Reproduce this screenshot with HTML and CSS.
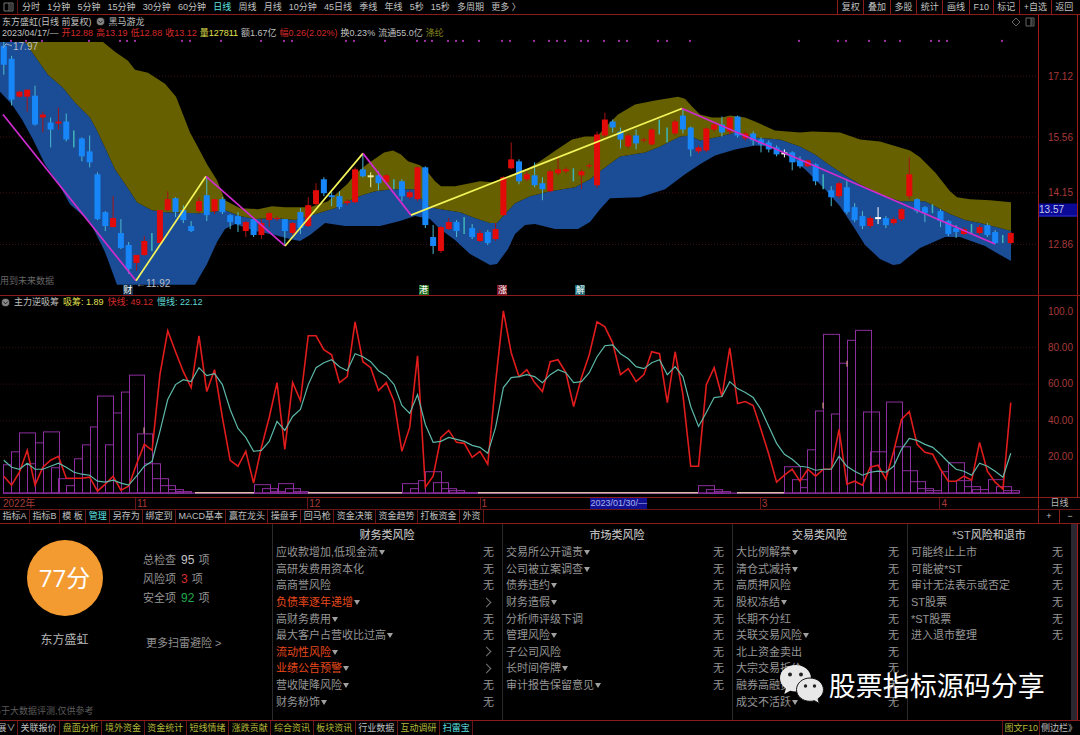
FILE: index.html
```html
<!DOCTYPE html>
<html lang="zh-CN">
<head>
<meta charset="utf-8">
<title>东方盛虹 日线</title>
<link rel="stylesheet" href="styles.css">
</head>
<body>
<header class="topbar">
  <button class="layout-btn" aria-label="布局"><svg viewBox="0 0 12 10"><path d="M1 1h9v8H1zM6 1v8M8 2v6" /></svg></button>
  <nav class="periods">
    <button>分时</button><button>1分钟</button><button>5分钟</button><button>15分钟</button><button>30分钟</button><button>60分钟</button><button class="on">日线</button><button>周线</button><button>月线</button><button>10分钟</button><button>45日线</button><button>季线</button><button>年线</button><button>5秒</button><button>15秒</button><button>多周期</button><button>更多 〉</button>
  </nav>
  <nav class="tools">
    <button>复权</button><button>叠加</button><button>多股</button><button>统计</button><button>画线</button><button>F10</button><button>标记</button><button>+自选</button><button>返回</button>
  </nav>
</header>

<section class="pane price">
  <div class="plot">
    <svg class="chart" id="price" viewBox="0 15 1038 281" preserveAspectRatio="none"></svg>
    <div class="legend">
      <div class="line title"><span>东方盛虹(日线 前复权)</span><svg class="round" viewBox="0 0 10 10"><circle cx="5" cy="5" r="4.5"/><path d="M2.5 4L5 6.5 7.5 4"/></svg><span>黑马游龙</span></div>
      <div class="line quote"><span>2023/04/17/—</span><span class="up">开12.88</span><span class="up">高13.19</span><span class="up">低12.88</span><span class="up">收13.12</span><span class="yel">量127811</span><span>额1.67亿</span><span class="up">幅0.26(2.02%)</span><span>换0.23%</span><span>流通55.0亿</span><span class="olive">涤纶</span></div>
    </div>
    <svg class="corner" viewBox="0 0 26 12"><path d="M6 2l4 4-4 4-4-4zM16 2h8v8h-8zM21 2v8M22 3v6"/></svg>
    <span class="note high">17.97</span>
    <span class="note low">←11.92</span>
    <span class="note future">用到未来数据</span>
    <span class="tag t1">财</span><span class="tag t2">港</span><span class="tag t3">涨</span><span class="tag t4">解</span>
  </div>
  <div class="scale"><span class="p1">17.12</span><span class="p2">15.56</span><span class="p3">14.15</span><span class="p4">12.86</span><span class="now">13.57</span></div>
  <div class="edge"></div>
</section>

<section class="pane osc">
  <div class="plot">
    <svg class="chart" id="osc" viewBox="0 296 1038 202" preserveAspectRatio="none"></svg>
    <div class="legend"><div class="line osc-title"><svg class="round" viewBox="0 0 10 10"><circle cx="5" cy="5" r="4.5"/><path d="M2.5 4L5 6.5 7.5 4"/></svg><span>主力逆吸筹</span><span class="yel">吸筹: 1.89</span><span class="up">快线: 49.12</span><span class="cyan">慢线: 22.12</span></div></div>
  </div>
  <div class="scale"><span class="q1">100.0</span><span class="q2">80.00</span><span class="q3">60.00</span><span class="q4">40.00</span><span class="q5">20.00</span></div>
  <div class="edge"></div>
</section>

<section class="dates">
  <div class="axis"><span class="d0">2022年</span><span class="d1">11</span><span class="d2">12</span><span class="d3">1</span><span class="d4">2023/01/30/—</span><span class="d5">3</span><span class="d6">4</span></div>
  <div class="cycle">日线</div>
</section>

<section class="templates">
  <nav class="tabs">
    <button>指标A</button><button>指标B</button><button>模 板</button><button class="on">管理</button><button>另存为</button><button>绑定到</button><button>MACD基本</button><button>赢在龙头</button><button>操盘手</button><button>回马枪</button><button>资金决策</button><button>资金趋势</button><button>打板资金</button><button>外资</button>
  </nav>
  <div class="zoomers"><button>+</button><button>−</button></div>
</section>

<main class="risk">
  <section class="summary">
    <div class="who"><div class="score">77分</div><div class="name">东方盛虹</div></div>
    <div class="counts">
      <p>总检查 <b>95</b> 项</p><p>风险项 <b class="bad">3</b> 项</p><p>安全项 <b class="ok">92</b> 项</p>
      <a href="#" class="more">更多扫雷避险 &gt;</a>
    </div>
    <p class="source">基于大数据评测,仅供参考</p>
  </section>
  <section class="group">
    <h2>财务类风险</h2>
    <ul>
      <li><span class="m">应收款增加,低现金流</span><i>无</i></li>
      <li><span>高研发费用资本化</span><i>无</i></li>
      <li><span>高商誉风险</span><i>无</i></li>
      <li class="warn"><span class="m">负债率逐年递增</span><i class="go"></i></li>
      <li><span class="m">高财务费用</span><i>无</i></li>
      <li><span class="m">最大客户占营收比过高</span><i>无</i></li>
      <li class="warn"><span class="m">流动性风险</span><i class="go"></i></li>
      <li class="warn"><span class="m">业绩公告预警</span><i class="go"></i></li>
      <li><span class="m">营收陡降风险</span><i>无</i></li>
      <li><span class="m">财务粉饰</span><i>无</i></li>
    </ul>
  </section>
  <section class="group">
    <h2>市场类风险</h2>
    <ul>
      <li><span class="m">交易所公开谴责</span><i>无</i></li>
      <li><span class="m">公司被立案调查</span><i>无</i></li>
      <li><span class="m">债券违约</span><i>无</i></li>
      <li><span class="m">财务造假</span><i>无</i></li>
      <li><span>分析师评级下调</span><i>无</i></li>
      <li><span class="m">管理风险</span><i>无</i></li>
      <li><span>子公司风险</span><i>无</i></li>
      <li><span class="m">长时间停牌</span><i>无</i></li>
      <li><span class="m">审计报告保留意见</span><i>无</i></li>
    </ul>
  </section>
  <section class="group">
    <h2>交易类风险</h2>
    <ul>
      <li><span class="m">大比例解禁</span><i>无</i></li>
      <li><span class="m">清仓式减持</span><i>无</i></li>
      <li><span>高质押风险</span><i>无</i></li>
      <li><span class="m">股权冻结</span><i>无</i></li>
      <li><span>长期不分红</span><i>无</i></li>
      <li><span class="m">关联交易风险</span><i>无</i></li>
      <li><span>北上资金卖出</span><i>无</i></li>
      <li><span>大宗交易折价</span><i>无</i></li>
      <li><span>融券高融资</span><i>无</i></li>
      <li><span class="m">成交不活跃</span><i>无</i></li>
    </ul>
  </section>
  <section class="group">
    <h2>*ST风险和退市</h2>
    <ul>
      <li><span>可能终止上市</span><i>无</i></li>
      <li><span>可能被*ST</span><i>无</i></li>
      <li><span>审计无法表示或否定</span><i>无</i></li>
      <li><span>ST股票</span><i>无</i></li>
      <li><span>*ST股票</span><i>无</i></li>
      <li><span>进入退市整理</span><i>无</i></li>
    </ul>
  </section>
  <div class="scroll"></div>
  <div class="edge"></div>
  <div class="brand">
    <svg viewBox="0 0 44 39">
      <path class="bubble" d="M15.500 0C6.900 0 0 5.900 0 13.200c0 4.200 2.300 7.900 5.900 10.300L4.300 29l5.900-3.200c1.700.4 3.400.7 5.300.7 8.600 0 15.500-6 15.500-13.300S24.100 0 15.500 0z"/>
      <circle cx="10" cy="9.500" r="2"/><circle cx="21" cy="9.500" r="2"/>
      <path class="bubble front" d="M30 13c-7.500 0-13.500 5.200-13.500 11.700S22.500 36.300 30 36.300c1.500 0 3-.2 4.400-.6l4.900 2.800-1.300-4.700c3.300-2.100 5.500-5.400 5.500-9.100C43.500 18.200 37.500 13 30 13z"/>
      <circle cx="25.500" cy="21" r="1.700"/><circle cx="34.500" cy="21" r="1.700"/>
    </svg>
    <span>股票指标源码分享</span>
  </div>
</main>

<footer class="bottom">
  <nav class="tabs">
    <button class="cut">展∨</button><button>关联报价</button><button class="y">盘面分析</button><button class="y">境外资金</button><button class="y">资金统计</button><button class="y">短线情绪</button><button class="y">涨跌贡献</button><button class="y">综合资讯</button><button class="y">板块资讯</button><button>行业数据</button><button class="y">互动调研</button><button class="on">扫雷宝</button>
  </nav>
  <nav class="side"><button class="y">图文F10</button><button>侧边栏》</button></nav>
</footer>
<script src="chart.js"></script>
</body>
</html>
```
FILE: styles.css
```css
* { box-sizing: border-box; }
body {
  margin: 0;
  height: 100vh;
  display: flex;
  flex-direction: column;
  overflow: hidden;
  background: #000;
  color: #c0c0c0;
  font: 9px/12px "Liberation Sans", "Noto Sans CJK SC", sans-serif;
}
button {
  margin: 0; padding: 0; border: 0;
  background: none; color: inherit; font: inherit;
  white-space: nowrap;
}
b { font-weight: normal; }
i { font-style: normal; }
.up { color: #d42a2a; }
.yel { color: #e2e250; }
.olive { color: #8c8c20; }
.cyan { color: #5fd6d0; }

.topbar { flex: 0 0 15px; display: flex; border-bottom: 1px solid #8c1c1c; }
.layout-btn { width: 18px; border-right: 1px solid #5a1212; }
.layout-btn svg { display: block; width: 12px; height: 10px; margin: 0 auto; fill: none; stroke: #777; }
.periods { width: 46.2%; margin-left: 4px; display: flex; justify-content: space-between; }
.periods .on, .tabs .on { color: #5fe0e0; }
.tools { margin-left: auto; margin-right: 3px; width: 240px; display: flex; }
.tools button { flex: 1 0 auto; border-left: 1px solid #8c1c1c; }

.pane { display: grid; grid-template-columns: minmax(0, 1fr) 39px 3px; min-height: 0; border-bottom: 1px solid #8c1c1c; }
.price { flex: 281 1 0; }
.osc { flex: 202 1 0; }
.plot { position: relative; overflow: hidden; }
.chart { position: absolute; inset: 0; width: 100%; height: 100%; }
.legend { position: relative; padding: 1px 2px; white-space: nowrap; }
.line { display: flex; align-items: center; height: 11px; gap: 4px; }
.quote { gap: 3px; }
.osc .legend { padding: 1px; }
.round { width: 9px; height: 9px; fill: #888; stroke: #111; }
.scale { position: relative; border-left: 1px solid #a01c1c; color: #a53a3a; font-size: 10px; }
.scale span { position: absolute; right: 4px; transform: translateY(-50%); }
.scale .p1 { top: 22%; }
.scale .p2 { top: 44%; }
.scale .p3 { top: 63.8%; }
.scale .p4 { top: 82.2%; }
.scale .now { top: 69.8%; left: 0; right: 0; background: #0a0a96; color: #c8c8e8; border-bottom: 1px solid #3030d0; }
.scale .q1 { top: 8%; }
.scale .q2 { top: 26%; }
.scale .q3 { top: 44%; }
.scale .q4 { top: 62.4%; }
.scale .q5 { top: 80.4%; }
.edge { border-left: 1px solid #a01c1c; }
.corner { position: absolute; right: 2px; top: 1px; width: 26px; height: 12px; fill: none; stroke: #666; }
.note { position: absolute; font-size: 10px; color: #b8bcc4; }
.high { left: 13px; top: 26px; }
.low { left: 13.1%; bottom: 5px; }
.future { left: 0; bottom: 8px; font-size: 9px; color: #666; }
.tag { position: absolute; bottom: 0; width: 10px; height: 10px; line-height: 10px; text-align: center; color: #fff; transform: translateX(-50%); }
.t1 { left: 12.3%; background: #10304c; }
.t2 { left: 40.8%; background: #1c6a1c; }
.t3 { left: 48.4%; background: #7a1424; }
.t4 { left: 55.9%; background: #1a6a72; }

.dates { flex: 0 0 12px; display: grid; grid-template-columns: minmax(0, 1fr) 42px; border-bottom: 1px solid #6a1616; color: #a53a3a; font-size: 10px; line-height: 11px; }
.axis { position: relative; }
.axis span { position: absolute; top: 0; border-left: 1px solid #6a1616; padding-left: 1px; }
.axis .d0 { left: 2px; border: 0; }
.d1 { left: 13%; }
.d2 { left: 29.6%; }
.d3 { left: 46.2%; }
.axis .d4 { left: 56.8%; background: #101090; color: #a8b4f0; border: 0; font-size: 9px; }
.d5 { left: 73.2%; }
.d6 { left: 90.5%; }
.cycle { border-left: 1px solid #a01c1c; color: #b4b4b4; font-size: 9px; text-align: center; }

.templates { flex: 0 0 14px; display: flex; justify-content: space-between; border-bottom: 1px solid #8c1c1c; }
.tabs { display: flex; }
.tabs button { flex: 1 0 auto; border-right: 1px solid #6a1616; }
.templates .tabs { width: 44.8%; }
.zoomers { width: 42px; display: flex; border-left: 1px solid #8c1c1c; }
.zoomers button { flex: 1; }
.zoomers button + button { border-left: 1px solid #8c1c1c; }

.risk {
  position: relative;
  flex: 197 1 0;
  min-height: 0;
  display: grid;
  grid-template-columns: 272fr 230fr 230fr 175fr 164fr 6px 3px;
  border-bottom: 1px solid #8c1c1c;
  font-size: 11px;
  line-height: 16px;
  color: #969696;
}
.summary { display: grid; grid-template-columns: 143px 1fr; grid-template-rows: 1fr auto; overflow: hidden; }
.who { width: 129px; padding-top: 16px; display: flex; flex-direction: column; align-items: center; }
.score { width: 76px; height: 76px; border-radius: 50%; background: #f39a30; color: #fff; font: 24px/76px "Open Sans", "Noto Sans CJK SC", sans-serif; text-align: center; }
.name { margin-top: 16px; font-size: 12px; color: #b4b4b4; }
.counts { padding-top: 27px; }
.counts p { margin: 0; line-height: 19px; }
.counts b { font-size: 12px; color: #c4c4c4; padding: 0 1px 0 2px; }
.counts .bad { color: #d83030; }
.counts .ok { color: #22a84c; }
.more { display: block; margin: 27px 0 0 3px; color: #909090; text-decoration: none; }
.source { margin: 0 0 1px -8px; font-size: 9px; color: #5c5c5c; grid-column: 1 / 3; white-space: nowrap; }
.group { border-left: 1px solid #2a2a2a; padding: 3px 8px 10px 3px; display: flex; flex-direction: column; min-height: 0; }
.group h2 { margin: 0 -4px 0 0; font-size: 11px; font-weight: 500; line-height: 17px; color: #b8b8b8; text-align: center; }
.group ul { flex: 1; min-height: 0; margin: 0; padding: 0; list-style: none; display: grid; grid-template-rows: repeat(10, minmax(0, 1fr)); }
.group li { display: flex; justify-content: space-between; align-items: center; white-space: nowrap; }
.m::after { content: ""; display: inline-block; margin: 0 0 1px 1px; border: 3px solid transparent; border-top: 5px solid #a0a0a0; border-bottom: 0; }
.warn span { color: #e8491c; }
.go { width: 7px; height: 7px; margin-right: 4px; border: solid #777; border-width: 1px 1px 0 0; transform: rotate(45deg); }
.scroll { background: #2b2630; }
.brand { position: absolute; left: 72.2%; bottom: 16px; display: flex; align-items: center; gap: 5px; color: #fff; font: 27px/36px "Noto Sans CJK SC", sans-serif; white-space: nowrap; }
.brand svg { width: 44px; height: 39px; fill: #222; }
.brand .bubble { fill: #e8e8e8; }
.brand .front { stroke: #111; }

.bottom { flex: 0 0 14px; display: flex; justify-content: space-between; overflow: hidden; }
.bottom .tabs { width: 44.2%; margin-left: -4px; }
.bottom .y { color: #b4b83a; }
.bottom .tabs .cut { flex: 0 0 22px; }
.side { display: flex; margin-right: 2px; }
.side button { border-left: 1px solid #6a1616; padding: 0 1px; }
```
FILE: chart.js
```js
const NS = "http://www.w3.org/2000/svg";
const step = 7.806;
const xAt = i => 3.8 + step * i;

function add(svg, tag, attrs) {
  const el = document.createElementNS(NS, tag);
  for (const k in attrs) el.setAttribute(k, attrs[k]);
  svg.appendChild(el);
}
function line(svg, points, stroke, width, extra) {
  add(svg, "polyline", Object.assign({ points, fill: "none", stroke, "stroke-width": width }, extra));
}

/* ---- price chart ---- */
const priceSvg = document.getElementById("price");
for (const y of [76.5, 137.5, 193.5, 245.5])
  line(priceSvg, `0,${y} 1038,${y}`, "#3c1010", 1, { "stroke-dasharray": "1 2" });

const midEdge = "25,42 48,75 63,88 75,103 90,118 97,131 105,148 115,170 130,192 137,203 152,211 165,213 200,214 225,211 240,217 255,220 275,219 295,221 318,214 335,209 350,201 362,196 375,192 392,190 415,190 425,205 435,209 460,213 475,219 490,224 497,224 504,216 515,204 530,197 550,192 575,188 590,180 600,172 612,163 620,157 645,153 660,147 680,137 690,136 700,141 720,137 735,133 755,138 780,140 800,147 815,155 830,166 845,176 860,185 880,195 900,202 925,202 935,207 950,215 965,221 980,224 1000,229 1011,232";
const upperEdge = "25,42 103,42 115,52 128,61 135,70 148,73 165,84 176,97 183,115 190,133 196,144 207,165 217,181 225,201 240,209 258,210 272,207 285,208 310,208 328,202 347,185 356,174 367,165 384,153 393,151 401,155 408,162 420,166 427,172 435,182 441,187 455,187 480,182 492,183 508,178 525,171 540,162 557,150 572,140 585,137 597,137 608,125 618,115 635,105 655,101 678,97 685,99 692,107 700,115 712,118 722,118 730,116 745,118 755,122 775,131 800,133 812,132 840,133 860,140 880,142 900,148 910,151 920,158 935,173 950,192 957,198 970,200 990,201 1011,203";
const lowerEdge = "0,92 12,105 22,120 33,140 45,165 60,187 70,205 90,223 105,253 117,286 195,286 207,265 217,243 225,230 235,225 255,232 275,236 290,240 300,242 310,236 325,224 345,227 380,227 400,222 415,217 430,220 440,230 455,241 470,255 490,266 497,265 508,250 515,235 525,226 535,225 555,230 578,230 590,223 600,210 610,199 640,198 665,190 685,175 700,165 715,156 735,150 755,146 770,147 790,158 805,170 815,180 825,190 840,207 855,230 865,246 880,260 893,266 900,265 920,249 945,238 960,238 985,247 995,253 1011,262";
const back = s => s.split(" ").reverse().join(" ");
add(priceSvg, "polygon", { points: `0,42 ${midEdge} ${back(lowerEdge)}`, fill: "#1b4d96" });
add(priceSvg, "polygon", { points: `${upperEdge} ${back(midEdge)}`, fill: "#666000" });

for (const x of [11,26,42,89,120,127,135,182,190,221,261,284,292,346,354,385,417,425,432,448,456,463,479,502,510,534,549,557,565,581,588,604,619,627,658,667,690,799,838,846,869,885,900,931,939,947,1002])
  add(priceSvg, "rect", { x: x - 1, y: 40, width: 2, height: 2, fill: "#a030a8" });

/* kind, body top, body bottom, wick top, wick bottom */
const candles = `b46,65,42,75 b59,100,56,106 r92,97,91,98 r90,97,90,112 b96,125,86,126 r115,118,112,133 b123,130,118,148 r122,124,108,130 b122,140,114,142 t131,148 b139,157,138,162 b152,163,136,168 b175,220,173,221 b213,227,212,232 r219,228,197,228 b234,249,220,250 b246,270,243,275 r256,264,256,272 r242,256,237,257 t234,252 r211,244,211,244 r200,211,192,212 b199,213,198,218 b211,221,206,224 b227,232,222,233 r202,212,198,214 b196,216,178,222 r200,212,200,215 b200,213,198,215 b216,223,215,230 b217,225,213,233 r223,232,222,238 b220,236,219,238 r224,236,220,240 r214,221,213,228 r219,220,217,222 b220,232,220,247 r224,234,223,236 b213,229,209,235 r206,227,198,228 r191,205,184,206 b180,194,178,197 b196,198,193,207 b197,208,192,210 r202,204,200,206 r170,203,168,204 b170,177,155,178 y176,178,173,188 b176,184,172,191 r176,183,175,186 t180,190 b182,197,180,202 r193,198,191,200 r168,200,167,202 b168,226,167,229 b238,247,226,255 r228,252,227,254 r223,230,219,231 b223,232,221,238 t218,235 b229,238,225,240 r234,242,231,243 b233,244,231,246 r230,240,224,242 r178,216,177,217 r160,169,143,170 b162,182,160,185 r175,180,172,182 b176,186,163,188 b184,190,178,201 r172,192,170,193 r170,174,157,176 r170,172,168,174 t169,182 r172,176,170,190 r166,167,164,169 r135,186,132,189 r120,136,113,138 b122,128,120,133 b132,140,128,149 r136,147,134,149 b136,144,130,150 r140,141,138,143 r130,145,129,146 t120,135 t128,143 r122,134,120,136 b116,130,110,134 b128,150,127,157 r148,152,146,154 r129,151,128,153 r125,130,123,132 b125,133,117,137 r118,132,117,135 b117,136,116,138 r134,139,132,141 b134,141,132,146 b140,145,138,153 b143,150,141,153 b148,155,146,157 w153,155,150,158 b153,163,152,171 b161,167,157,169 r161,167,160,168 b165,182,164,186 t175,190 b191,198,187,207 r184,197,182,199 b188,213,180,215 b208,221,204,223 b217,227,212,230 r219,227,217,229 w218,220,208,225 b219,226,217,229 r220,224,218,226 r210,220,209,222 r175,197,158,200 b200,212,199,214 b208,214,207,223 t205,214 b212,222,210,228 b222,235,221,237 b229,233,226,239 r230,235,228,236 t225,235 r228,234,226,236 b226,236,224,238 b233,244,231,245 t236,244 r234,244,233,245`.split(" ");
candles.forEach((c, i) => {
  const k = c[0], v = c.slice(1).split(",").map(Number), x = xAt(i);
  if (k === "t") {
    add(priceSvg, "rect", { x: x - 1, y: v[0], width: 1.5, height: v[1] - v[0], fill: "#3fb4b8" });
    return;
  }
  const body = { b: "#1686f8", r: "#e30a0a", y: "#f0f0a0", w: "#fff" }[k];
  const wick = { b: "#4cb8d0", r: "#a81414", y: "#f0f0a0", w: "#fff" }[k];
  add(priceSvg, "rect", { x: x - .5, y: v[2], width: 1, height: v[3] - v[2], fill: wick });
  add(priceSvg, "rect", { x: x - 3, y: v[0], width: 6, height: v[1] - v[0], fill: body });
});

const legs = [[3,115],[136,282],[206,177],[285,247],[363,154],[411,216],[682,109],[995,245]];
for (let i = 1; i < legs.length; i++)
  line(priceSvg, `${legs[i-1]} ${legs[i]}`, i % 2 ? "#d02cd0" : "#f4f45a", 1.7);
line(priceSvg, "3,48 6,44 12,46", "#9ab", 1);

/* ---- oscillator ---- */
const oscSvg = document.getElementById("osc");
for (const y of [347.5, 384.5, 421.5, 457.5])
  line(oscSvg, `0,${y} 1038,${y}`, "#341010", 1, { "stroke-dasharray": "1 2" });

const bars = "3,11,465 11,19,452 19,35,433 27,35,464 35,43,443 43,59,432 51,59,468 58,74,479 66,74,486 74,82,459 82,90,445 90,97,427 97,113,396 105,113,445 113,121,413 121,129,392 129,144,375 137,152,434 144,160,464 152,168,479 160,175,486 168,183,490 175,191,492 254,270,485 262,277,489 270,285,492 278,293,484 285,300,489 293,308,492 402,418,484 410,418,489 418,425,481 425,441,472 433,448,483 441,456,489 449,464,491 456,480,493 698,714,486 706,722,490 714,730,492 784,800,467 792,807,480 800,807,488 807,815,450 815,823,411 823,839,334 831,839,414 839,847,363 847,855,340 855,871,330 863,879,412 870,886,452 886,902,402 894,910,447 902,917,471 910,925,482 917,933,489 925,941,491 941,948,472 948,964,463 956,971,481 964,980,487 972,988,490 988,1003,480 996,1011,487 1003,1019,491";
line(oscSvg, "3,494 1019,494", "#8a2a9c", 1.5);
for (const b of bars.split(" ")) {
  const [l, r, t] = b.split(",").map(Number);
  add(oscSvg, "rect", { x: l + .5, y: t + .5, width: r - l, height: 493.5 - t, fill: "none", stroke: "#8c2e9e", "stroke-width": 1 });
}
for (const [l, r] of [[195,254],[308,402],[478,698],[737,784]])
  line(oscSvg, `${l},493.5 ${r},493.5`, "#d8b8a8", 1.5);
for (const [x, y] of [[144,428],[823,403],[847,361]])
  line(oscSvg, `${x},${y} ${x},${y + 6}`, "#e8b090", 1);

const fast = [477,486,473,451,486,468,461,457,479,479,479,478,492,485,477,491,487,465,445,451,375,331,352,372,388,336,392,370,418,461,467,452,484,448,418,383,450,383,401,336,336,350,355,383,377,322,362,368,391,383,402,452,428,356,488,477,438,431,443,444,458,452,465,383,311,353,377,370,383,392,362,360,373,407,378,355,322,327,343,375,369,382,375,352,354,403,352,395,467,467,385,368,397,348,404,402,406,430,455,483,476,470,482,470,477,470,470,430,485,482,486,468,466,480,452,420,412,445,453,455,470,482,482,477,481,443,472,483,490,403];
const slow = [461,468,470,464,470,470,467,464,468,473,475,476,482,483,481,484,486,477,467,462,432,400,385,380,382,368,376,374,385,410,429,438,452,451,442,422,431,417,410,385,368,363,360,367,371,354,357,362,371,376,385,406,414,395,425,443,442,438,440,442,446,448,454,428,388,378,377,375,377,383,375,370,373,383,382,373,357,346,345,354,359,367,369,363,360,375,367,377,407,427,413,398,397,382,389,393,398,410,427,444,455,460,467,468,471,470,470,457,467,472,476,473,472,473,467,450,439,441,445,448,455,463,470,472,476,464,467,472,478,454];
const path = a => a.map((y, i) => `${xAt(i)},${y}`).join(" ");
line(oscSvg, path(fast), "#e01c1c", 1.6);
line(oscSvg, path(slow), "#5cb8a8", 1.2);
```
